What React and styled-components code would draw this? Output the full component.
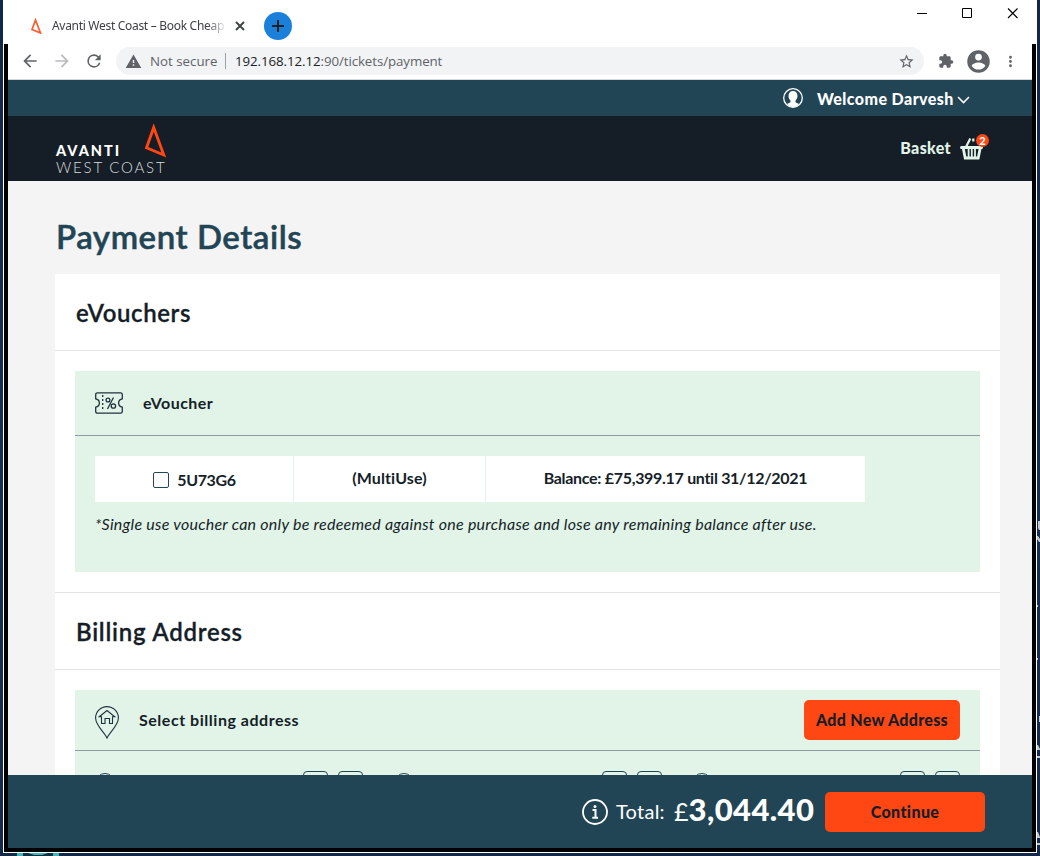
import React from "react";
import styled, { createGlobalStyle } from "styled-components";

const Global = createGlobalStyle`
  * { box-sizing: border-box; }
  body { margin: 0; overflow: hidden; }
  h1, h2, h3, p { margin: 0; }
  button { font: inherit; border: 0; padding: 0; }
`;

const Desktop = styled.div`
  position: relative;
  width: 1040px;
  height: 856px;
  padding: 0 3px 3px;
  overflow: hidden;
  background: linear-gradient(#13264a, #172f56 60%, #14284a);
`;
const DesktopIcon = styled.svg`
  position: absolute;
  left: 14px;
  top: 853px;
`;
const DesktopLabels = styled.svg`
  position: absolute;
  left: 1037px;
  top: 510px;
`;
const Window = styled.div`
  display: flex;
  flex-direction: column;
  height: 853px;
  background: #fff;
  padding: 0 1px 1px;
`;
const TabStrip = styled.div`
  display: flex;
  height: 44px;
  flex: none;
  padding-left: 25px;
`;
const Tab = styled.div`
  display: flex;
  align-items: center;
  width: 220px;
  height: 52px;
  color: #3c4043;
  font: 12px/16px "Noto Sans", sans-serif;
`;
const TabTitle = styled.span`
  width: 173px;
  margin: 0 10px 0 9px;
  white-space: nowrap;
  letter-spacing: ${(p) => p.$track}px;
  mask-image: linear-gradient(90deg, #000 155px, transparent 175px);
`;
const NewTab = styled.button`
  display: grid;
  place-items: center;
  width: 28px;
  height: 28px;
  margin: 12px 0 0 15px;
  border-radius: 50%;
  background: #1a80d9;
`;
const WindowButtons = styled.div`
  display: flex;
  gap: 35px;
  margin: 8px 18px 0 auto;
`;
const Frame = styled.div`
  display: flex;
  flex-direction: column;
  flex: 1;
  min-height: 0;
  padding: 0 4px 4px;
  background: #000;
`;
const Toolbar = styled.div`
  display: flex;
  align-items: center;
  flex: none;
  height: 36px;
  padding: 0 11px 1px 12px;
  background: #fff;
  border-bottom: 1px solid #d5d7da;
`;
const NavIcons = styled.div`
  display: flex;
  gap: 12px;
`;
const UrlBar = styled.div`
  display: flex;
  align-items: center;
  width: 808px;
  height: 28px;
  margin-left: 12px;
  padding: 0 9px;
  border-radius: 14px;
  background: #f1f3f4;
  color: #5f6368;
  font: 13.3px/20px "Open Sans", sans-serif;
`;
const Security = styled.span`
  width: 67px;
  margin-left: 8px;
  white-space: nowrap;
`;
const Divider = styled.span`
  width: 1px;
  height: 16px;
  margin: 0 9px 0 8px;
  background: #9aa0a6;
`;
const Url = styled.span`
  flex: 1;
  letter-spacing: ${(p) => p.$track}px;
  b { font-weight: 400; color: #202124; }
`;
const ToolIcons = styled.div`
  display: flex;
  align-items: center;
  gap: 10.5px;
  margin-left: 14px;
`;
const Page = styled.div`
  display: flex;
  flex-direction: column;
  flex: 1;
  min-height: 0;
  background: #f4f4f4;
  color: #151e27;
  font-family: Lato, sans-serif;
`;
const Text = styled.span`
  font-size: ${(p) => p.$size || 16}px;
  font-weight: ${(p) => p.$weight || 700};
  letter-spacing: ${(p) => p.$track || 0}px;
  white-space: nowrap;
`;
const AccountBar = styled.div`
  display: flex;
  align-items: center;
  justify-content: flex-end;
  flex: none;
  height: 36px;
  padding-right: 62px;
  background: #224555;
  color: #fff;
`;
const AccountName = styled(Text)`
  width: 136px;
  margin: 0 4px 0 14px;
`;
const Chevron = styled.svg`
  margin-top: 4px;
`;
const SiteHeader = styled.header`
  display: flex;
  justify-content: space-between;
  flex: none;
  height: 65px;
  padding: 0 41px 0 48px;
  background: #151e27;
  color: #fff;
`;
const Logo = styled.div`
  position: relative;
  width: 112px;
  padding-top: 27px;
`;
const LogoMark = styled.svg`
  position: absolute;
  left: 88px;
  top: 7px;
`;
const LogoLine = styled.div`
  height: 16px;
  font: ${(p) => (p.$light ? "300 15px/16px" : "900 14.5px/16px")} Lato, sans-serif;
  letter-spacing: ${(p) => p.$track}px;
  white-space: nowrap;
  color: ${(p) => (p.$light ? "#d9dcde" : "#fff")};
`;
const Basket = styled.div`
  display: flex;
  gap: 9px;
  padding-top: 16px;
  color: #e1f4e7;
  line-height: 31px;
`;
const BasketIcon = styled.div`
  position: relative;
  width: 31px;
`;
const Badge = styled.span`
  position: absolute;
  left: 16px;
  top: 2px;
  width: 13px;
  height: 13px;
  border-radius: 50%;
  background: #ff4713;
  color: #fff;
  font: 900 11px/13px Lato, sans-serif;
  text-align: center;
`;
const Main = styled.main`
  flex: 1;
  min-height: 0;
  overflow: hidden;
  padding: 0 32px 0 47px;
`;
const PageTitle = styled.h1`
  height: 93px;
  padding-left: 1px;
  color: #224555;
  font-size: 33px;
  font-weight: 600;
  line-height: 111px;
  letter-spacing: ${(p) => p.$track}px;
  -webkit-text-stroke: 0.5px currentColor;
`;
const Card = styled.section`
  background: #fff;
  border-bottom: 1px solid #e3e4e5;
  height: ${(p) => p.$height}px;
`;
const CardTitle = styled.h2`
  height: 77px;
  padding-left: 21px;
  border-bottom: 1px solid #e3e4e5;
  font-size: 24px;
  font-weight: 600;
  line-height: 77px;
  letter-spacing: ${(p) => p.$track}px;
  -webkit-text-stroke: 0.3px currentColor;
`;
const Panel = styled.div`
  height: 201px;
  margin: 20px 20px 0;
  background: #e1f4e7;
`;
const PanelHead = styled.div`
  display: flex;
  align-items: center;
  height: ${(p) => p.$height}px;
  padding: 0 20px;
  border-bottom: 1px solid #8b9da3;
`;
const PanelLabel = styled(Text)`
  flex: 1;
  margin-left: 20px;
  padding-bottom: 2px;
`;
const Button = styled.button`
  width: ${(p) => p.$width}px;
  height: 40px;
  padding-bottom: 1px;
  border-radius: 5px;
  background: #ff4713;
  color: #151e27;
  text-align: center;
`;
const VoucherRow = styled.div`
  display: grid;
  grid-template-columns: 198px 191px 379px;
  gap: 1px;
  width: 770px;
  height: 46px;
  margin: 20px 20px 0;
`;
const Cell = styled.div`
  display: flex;
  align-items: center;
  justify-content: center;
  gap: 8px;
  padding: ${(p) => (p.$choice ? "2px 0 0 1px" : "0 0 3px")};
  background: #fff;
`;
const Checkbox = styled.span`
  width: 16px;
  height: 16px;
  border: 1px solid #224555;
  border-radius: 2px;
`;
const VoucherCode = styled(Text)`
  padding-bottom: 2px;
`;
const Note = styled.p`
  margin: 11px 20px 0;
  font-size: 16px;
  font-style: italic;
  font-weight: 400;
  line-height: 22px;
  letter-spacing: ${(p) => p.$track}px;
  white-space: nowrap;
`;
const AddressRow = styled.div`
  display: grid;
  grid-template-columns: repeat(3, 298.5px);
  padding: 20px 20px 0;
`;
const AddressOption = styled.div`
  display: flex;
  gap: 10px;
`;
const Radio = styled.span`
  width: 20px;
  height: 20px;
  margin: 2px auto 0 0;
  border: 1px solid #224555;
  border-radius: 50%;
`;
const SmallButton = styled.span`
  width: 25px;
  height: 25px;
  border: 1px solid #224555;
  border-radius: 4px;
  &:last-child { margin-right: 30.5px; }
`;
const Footer = styled.footer`
  display: flex;
  align-items: center;
  justify-content: flex-end;
  flex: none;
  height: 73px;
  padding-right: 47px;
  background: #224555;
  color: #fff;
`;
const TotalLabel = styled(Text)`
  width: 48px;
  margin: 0 10px 0 8px;
  padding-bottom: 1px;
`;
const Amount = styled(Text)`
  width: 141px;
  margin-right: 10px;
  line-height: 40px;
  padding-bottom: 3px;
  small { font-size: 25px; font-weight: 400; letter-spacing: 0; }
`;

const material = {
  back: "M20 11H7.83l5.59-5.59L12 4l-8 8 8 8 1.41-1.41L7.83 13H20v-2z",
  forward: "M12 4l-1.41 1.41L16.17 11H4v2h12.17l-5.58 5.59L12 20l8-8z",
  reload: "M17.65 6.35A7.958 7.958 0 0 0 12 4a8 8 0 1 0 7.73 10h-2.08A6 6 0 1 1 12 6c1.66 0 3.14.69 4.22 1.78L13 11h7V4l-2.35 2.35z",
  warning: "M1 21h22L12 2 1 21zm12-3h-2v-2h2v2zm0-4h-2v-4h2v4z",
  star: "M22 9.24l-7.19-.62L12 2 9.19 8.63 2 9.24l5.46 4.73L5.82 21 12 17.27 18.18 21l-1.63-7.03L22 9.24zM12 15.4l-3.76 2.27 1-4.28-3.32-2.88 4.38-.38L12 6.1l1.71 4.04 4.38.38-3.32 2.88 1 4.28L12 15.4z",
  puzzle: "M20.5 11H19V7c0-1.1-.9-2-2-2h-4V3.5a2.5 2.5 0 0 0-5 0V5H4c-1.1 0-2 .9-2 2v3.8h1.5a2.7 2.7 0 0 1 0 5.4H2V20c0 1.1.9 2 2 2h3.8v-1.5a2.7 2.7 0 0 1 5.4 0V22H17c1.1 0 2-.9 2-2v-4h1.5a2.5 2.5 0 0 0 0-5z",
  account: "M12 2a10 10 0 1 0 0 20 10 10 0 0 0 0-20zm0 3a3 3 0 1 1 0 6 3 3 0 0 1 0-6zm0 14.2a7.2 7.2 0 0 1-6-3.22c.03-1.99 4-3.08 6-3.08 1.99 0 5.97 1.09 6 3.08a7.2 7.2 0 0 1-6 3.22z",
  more: "M12 8a2 2 0 1 0 0-4 2 2 0 0 0 0 4zm0 2a2 2 0 1 0 0 4 2 2 0 0 0 0-4zm0 6a2 2 0 1 0 0 4 2 2 0 0 0 0-4z",
};
const Icon = ({ name, size = 20, color = "#5f6368" }) => (
  <svg width={size} height={size} viewBox="0 0 24 24" fill={color}>
    <path d={material[name]} />
  </svg>
);

const VoucherIcon = () => (
  <svg width="28" height="22" viewBox="0 0 28 22" fill="none" stroke="#1f333f" strokeWidth="1.3">
    <path d="M2.5 .8H25.5Q27.3 .8 27.3 2.5V6.8Q23.6 7.5 23.6 11T27.3 15.2V19.5Q27.3 21.2 25.5 21.2H2.5Q.7 21.2 .7 19.5V15.2Q4.4 14.5 4.4 11T.7 6.8V2.5Q.7 .8 2.5 .8Z" />
    <path d="M7.7 3v16" strokeDasharray="2 2" />
    <path d="M18.5 5.5L12.5 17" />
    <circle cx="13" cy="8" r="1.9" />
    <circle cx="18.4" cy="14" r="2.2" />
  </svg>
);
const PinSvg = styled.svg`
  margin-top: 4px;
`;
const HomePin = () => (
  <PinSvg width="24" height="33" viewBox="0 0 24 33" fill="none" stroke="#1f333f" strokeWidth="1.1">
    <path d="M12 32C10 27 .6 19.5 .6 12A11.4 11.4 0 0 1 23.4 12C23.4 19.5 14 27 12 32Z" />
    <path d="M4.3 10.8L12 4.5l7.7 6.3H17.5V17.5H14.5V12.5H10V17.5H6.5V10.8Z" />
  </PinSvg>
);
const BasketGlyph = () => (
  <svg width="24" height="31" viewBox="0 0 24 31" fill="none" stroke="#e1f4e7">
    <path d="M1.5 15.5H21.5" strokeWidth="3" strokeLinecap="round" />
    <path d="M3.2 16L5.2 26H18.2L20.2 16" strokeWidth="2.8" />
    <path d="M8.6 17V25M11.8 17V25M15 17V25" strokeWidth="1.8" />
    <path d="M6 15L10.3 6.5M13.3 6.5v3" strokeWidth="2.2" />
  </svg>
);
const Avatar = () => (
  <svg width="20" height="20" viewBox="0 0 20 20">
    <circle cx="10" cy="10" r="9.3" fill="none" stroke="#fff" strokeWidth="1.3" />
    <path fill="#fff" d="M10 3C7 3 5.5 5 5.5 8c0 2 .8 3.2 2 4.7v1.5L4 16Q6.5 19.2 10 19.2T16 16l-3.5-1.8v-1.5c1.2-1.5 2-2.7 2-4.7 0-3-1.5-5-4.5-5z" />
  </svg>
);

const Labeled = ({ width, track, children }) => (
  <Button $width={width}><Text $weight={900} $track={track}>{children}</Text></Button>
);

export default function App() {
  return (
    <Desktop>
      <Global />
      <Window>
        <TabStrip>
          <Tab>
            <svg width="14" height="16" viewBox="0 0 14 16" fill="none" stroke="#ff5a2c" strokeWidth="1.7">
              <path d="M6.5 2L3 11.5L11.5 15Z" />
            </svg>
            <TabTitle $track={-0.3}>Avanti West Coast – Book Cheap</TabTitle>
            <svg width="10" height="10" viewBox="0 0 10 10" stroke="#3c4043" strokeWidth="1.8">
              <path d="M1 1L9 9M9 1L1 9" />
            </svg>
          </Tab>
          <NewTab>
            <svg width="12" height="12" viewBox="0 0 12 12" stroke="#202124" strokeWidth="2">
              <path d="M6 0V12M0 6H12" />
            </svg>
          </NewTab>
          <WindowButtons>
            <svg width="10" height="11" stroke="#000"><path d="M0 5.5H10" /></svg>
            <svg width="10" height="10" fill="none" stroke="#000"><path d="M.5 .5H9.5V9.5H.5Z" /></svg>
            <svg width="11" height="11" stroke="#000" strokeWidth="1.1"><path d="M1 .5L10.5 10M10.5 .5L1 10" /></svg>
          </WindowButtons>
        </TabStrip>
        <Frame>
          <Toolbar>
            <NavIcons>
              <Icon name="back" />
              <Icon name="forward" color="#b9bbbe" />
              <Icon name="reload" />
            </NavIcons>
            <UrlBar>
              <Icon name="warning" size={17} />
              <Security>Not secure</Security>
              <Divider />
              <Url $track={-0.08}><b>192.168.12.12</b>:90/tickets/payment</Url>
              <Icon name="star" size={17} />
            </UrlBar>
            <ToolIcons>
              <Icon name="puzzle" size={16} />
              <Icon name="account" size={27} />
              <Icon name="more" size={17} />
            </ToolIcons>
          </Toolbar>
          <Page>
            <AccountBar>
              <Avatar />
              <AccountName $weight={900} $track={0.42}>Welcome Darvesh</AccountName>
              <Chevron width="13" height="8" viewBox="0 0 13 8" fill="none" stroke="#fff" strokeWidth="1.6">
                <path d="M1 1L6.5 6.5L12 1" />
              </Chevron>
            </AccountBar>
            <SiteHeader>
              <Logo>
                <LogoMark width="24" height="36" viewBox="0 0 24 36" fill="none" stroke="#ff4713" strokeWidth="2.9">
                  <path d="M9.7 5L2.5 27.5L19.8 35.5Z" transform="scale(1 .9)" />
                </LogoMark>
                <LogoLine $track={2}>AVANTI</LogoLine>
                <LogoLine $light $track={1.8}>WEST COAST</LogoLine>
              </Logo>
              <Basket>
                <Text $weight={900} $track={0.35}>Basket</Text>
                <BasketIcon>
                  <BasketGlyph />
                  <Badge>2</Badge>
                </BasketIcon>
              </Basket>
            </SiteHeader>
            <Main>
              <PageTitle $track={0.55}>Payment Details</PageTitle>
              <Card $height={319}>
                <CardTitle $track={0.6}>eVouchers</CardTitle>
                <Panel>
                  <PanelHead $height={65}>
                    <VoucherIcon />
                    <PanelLabel $track={0.45}>eVoucher</PanelLabel>
                  </PanelHead>
                  <VoucherRow>
                    <Cell $choice><Checkbox /><VoucherCode $track={-0.35}>5U73G6</VoucherCode></Cell>
                    <Cell><Text $track={0.1}>(MultiUse)</Text></Cell>
                    <Cell><Text $track={-0.3}>Balance: £75,399.17 until 31/12/2021</Text></Cell>
                  </VoucherRow>
                  <Note $track={0.25}>*Single use voucher can only be redeemed against one purchase and lose any remaining balance after use.</Note>
                </Panel>
              </Card>
              <Card $height={300}>
                <CardTitle $track={0.75}>Billing Address</CardTitle>
                <Panel>
                  <PanelHead $height={61}>
                    <HomePin />
                    <PanelLabel $track={0.53}>Select billing address</PanelLabel>
                    <Labeled width={156} track={0.3}>Add New Address</Labeled>
                  </PanelHead>
                  <AddressRow>
                    {[0, 1, 2].map((n) => (
                      <AddressOption key={n}><Radio /><SmallButton /><SmallButton /></AddressOption>
                    ))}
                  </AddressRow>
                </Panel>
              </Card>
            </Main>
            <Footer>
              <svg width="26" height="26" viewBox="0 0 26 26" fill="none" stroke="#fff">
                <circle cx="13" cy="13" r="12" strokeWidth="1.8" />
                <path d="M10.5 11H13.5V18.5M10.3 18.7H16" strokeWidth="2" />
                <circle cx="13" cy="7.5" r="1.5" fill="#fff" stroke="none" />
              </svg>
              <TotalLabel $size={20} $weight={400} $track={0.25}>Total:</TotalLabel>
              <Amount $size={31} $weight={900} $track={0.4}><small>£</small>3,044.40</Amount>
              <Labeled width={160} track={0.4}>Continue</Labeled>
            </Footer>
          </Page>
        </Frame>
      </Window>
      <DesktopIcon width="48" height="3"><path d="M0 0H48V3H0Z" fill="#0d3140" /><path d="M3 0H9V3H3ZM14 0H34L28 2H20ZM39 0H45V3H39Z" fill="#43b4ba" /></DesktopIcon>
      <DesktopLabels width="3" height="346" fill="#c3cad2">
        <path d="M1 11h2v9h-1l-1-2zM0 26h1l2 3v3h-1l-2-3zM0 95h1v2h-1zM0 148h1v2h-1zM2 206h1v6h-1zM0 235h1l2 4v1h-3zM0 246h3v2h-3zM0 322h1l2 5v1h-3zM0 333h3v2h-3z" />
      </DesktopLabels>
    </Desktop>
  );
}
